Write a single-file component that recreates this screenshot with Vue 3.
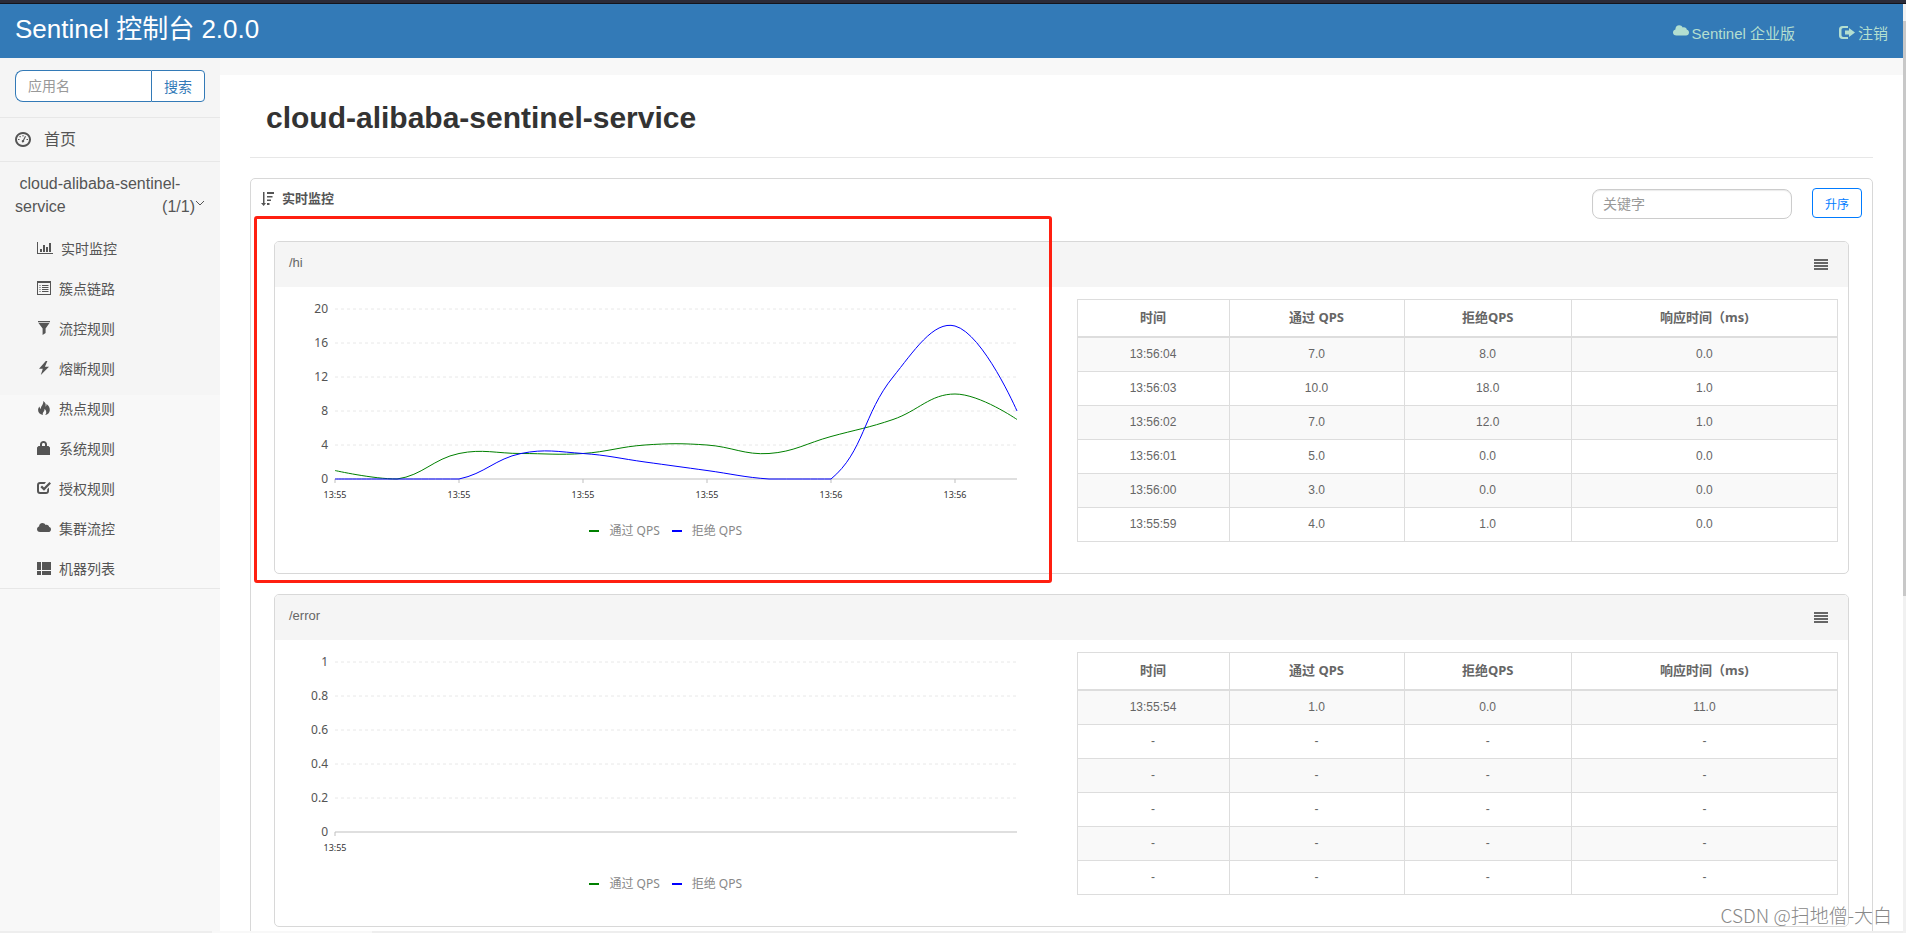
<script setup>
import { ref, computed, onMounted, onBeforeUnmount } from 'vue'

const menu = [
  { label: '实时监控', icon: 'chart' },
  { label: '簇点链路', icon: 'listAlt' },
  { label: '流控规则', icon: 'filter' },
  { label: '熔断规则', icon: 'flash' },
  { label: '热点规则', icon: 'fire' },
  { label: '系统规则', icon: 'lock' },
  { label: '授权规则', icon: 'check' },
  { label: '集群流控', icon: 'cloud' },
  { label: '机器列表', icon: 'thList' },
]

const icons = {
  chart: 'M0 1h1v11h15v1H0zM3 8h2v3H3zM6 4h2v7H6zM9 6h2v5H9zM12 2h2v9h-2z',
  listAlt: 'M0 0h14v14H0zM1 2v11h12V2zM2.500 4h1v1h-1zM5 4h6.500v1H5zM2.500 6h1v1h-1zM5 6h6.500v1H5zM2.500 8h1v1h-1zM5 8h6.500v1H5zM2.500 10h1v1h-1zM5 10h6.500v1H5z',
  filter: 'M1 0h12v1.200H1zM1.500 2h11L8.600 7.500V12L5.600 14V7.500z',
  flash: 'M8.800 0L2 7.800h3.800L3.800 14 12 5.800H7.900L10.400 0z',
  fire: 'M6.200 0c2.300 1.500 3 3.400 2.300 5.500.8-.3 1.100-1.200.9-2.500 2.400 1.500 3.600 3.900 3.400 6.200-.2 2.600-2 4.400-4.600 4.800 1.700-1.900 1.400-4.200-.7-6.200.2 1.800-.7 2.800-1.400 3.800-.5.800-.5 1.600-.2 2.400C2.900 13.500 1 11.600 1.100 9.100c0-1.400.6-2.500 1.500-3.500.1 1.400.5 2.100 1.300 2.300C3.700 4.800 6.800 3.600 6.200 0z',
  lock: 'M3 5V3.500C3 1.300 4.500 0 6.500 0S10 1.300 10 3.500V5h1.500L13 6.500V14H0V6.500L1.500 5zM5 5h3V3.500C8 2.500 7.500 2 6.500 2S5 2.500 5 3.500z',
  check: 'M3 1h6l-1.500 1.900H3.400C2.400 2.900 2 3.400 2 4.300v5.400c0 .9.500 1.400 1.400 1.400h5.400c.9 0 1.400-.5 1.400-1.400V8.200L12 6.400V10c0 2-1.200 3-3 3H3c-2 0-3-1.200-3-3V4c0-1.900 1.200-3 3-3zM12.400 1L14 2.500 7 9.700 3.400 6.200 5 4.600l2 2z',
  cloud: 'M3 11C1.200 11 0 9.900 0 8.300c0-1.400.9-2.400 2.100-2.700C2 3.400 3.600 2 5.400 2c1.400 0 2.500.7 3.100 1.900 1.900-.6 3.500.5 3.600 2.100C13.400 6.200 14 7.200 14 8.400c0 1.500-1.100 2.600-2.600 2.600z',
  thList: 'M0 1h4v8H0zM5 1h9v8H5zM0 10h4v4H0zM5 10h9v4H5z',
  dashboard: 'M8 0a8 7.500 0 1 0 .01 0zM8 2a6 5.500 0 1 1-.01 0zM7.500 3h1v1.500h-1zM4.500 4h1.200v1.200H4.500zM3 7h1.500v1H3zM11.500 7H13v1h-1.500zM10 4l1 .5L9 8.600a1.200 1.200 0 1 1-1-.6z',
  sort: 'M2 0h1.500v11H5L2.700 14 0 11h2zM6 0h7v2H6zM6 4h5.500v1.500H6zM6 7.500h4V9H6zM6 11h2.500v2H6z',
  justify: 'M0 0h14v2H0zM0 3h14v2H0zM0 6h14v2H0zM0 9h14v2H0z',
  logout: 'M3.500 0H9v2H4.500C3 2 2.500 2.700 2.500 4v5c0 1.300.7 2 2 2H9v2H3.500C1.200 13 0 11.700 0 9.500v-6C0 1.300 1.200 0 3.500 0zM10 2l6 4.500L10 11V8.500H6v-4h4z',
}

const headings = ['时间', '通过 QPS', '拒绝QPS', '响应时间（ms)']
const blank = ['-', '-', '-', '-']

const cards = [
  {
    name: '/hi',
    max: 20,
    yTicks: ['20', '16', '12', '8', '4', '0'],
    xTicks: ['13:55', '13:55', '13:55', '13:55', '13:56', '13:56'],
    pass: [1, 0, 3, 3, 3, 4, 4, 3, 5, 7, 10, 7],
    block: [0, 0, 0, 3, 3, 2, 1, 0, 0, 12, 18, 8],
    rows: [
      ['13:56:04', '7.0', '8.0', '0.0'],
      ['13:56:03', '10.0', '18.0', '1.0'],
      ['13:56:02', '7.0', '12.0', '1.0'],
      ['13:56:01', '5.0', '0.0', '0.0'],
      ['13:56:00', '3.0', '0.0', '0.0'],
      ['13:55:59', '4.0', '1.0', '0.0'],
    ],
    marked: true,
  },
  {
    name: '/error',
    max: 1,
    yTicks: ['1', '0.8', '0.6', '0.4', '0.2', '0'],
    xTicks: ['13:55'],
    pass: [],
    block: [],
    rows: [['13:55:54', '1.0', '0.0', '11.0'], blank, blank, blank, blank, blank],
    marked: false,
  },
]

const LEFT = 60
const RIGHT = 40
const TOP = 22
const BOTTOM = 192
const GAP = 34

const chartEls = ref([])
const chartWidth = ref(782)
const plotRight = computed(() => chartWidth.value - RIGHT)
const step = computed(() => (plotRight.value - LEFT) / 11)

// Smooth line through the points, with control points kept inside the plot area.
function smoothPath(values, max) {
  if (!values.length) return ''
  const pts = values.map((v, i) => [LEFT + i * step.value, BOTTOM - (v / max) * (BOTTOM - TOP)])
  const clamp = ([x, y]) => [
    Math.min(Math.max(x, LEFT), plotRight.value),
    Math.min(Math.max(y, TOP), BOTTOM),
  ]
  const dist = (a, b) => Math.hypot(a[0] - b[0], a[1] - b[1])
  const handles = pts.map((p, i) => {
    if (i === 0 || i === pts.length - 1) return [p, p]
    const prev = pts[i - 1]
    const next = pts[i + 1]
    const vx = (next[0] - prev[0]) * 0.4
    const vy = (next[1] - prev[1]) * 0.4
    const before = dist(p, prev)
    const after = dist(p, next)
    const a = before / (before + after)
    const b = after / (before + after)
    return [clamp([p[0] - vx * a, p[1] - vy * a]), clamp([p[0] + vx * b, p[1] + vy * b])]
  })
  let d = `M${pts[0]}`
  for (let i = 1; i < pts.length; i++) d += `C${handles[i - 1][1]} ${handles[i][0]} ${pts[i]}`
  return d
}

let observer
onMounted(() => {
  const measure = () => {
    if (chartEls.value[0]) chartWidth.value = Math.round(chartEls.value[0].clientWidth)
  }
  measure()
  observer = new ResizeObserver(measure)
  observer.observe(chartEls.value[0])
})
onBeforeUnmount(() => observer?.disconnect())
</script>

<template>
  <div class="shell">
    <div class="window-edge"></div>
    <div class="viewport">
      <div class="page">
        <header class="topbar">
          <a class="brand" href="#">Sentinel 控制台 2.0.0</a>
          <nav class="top-links">
            <a href="#"><svg class="cloud" viewBox="0 0 14 14"><path :d="icons.cloud" /></svg>Sentinel 企业版</a>
            <a href="#"><svg class="logout" viewBox="0 0 16 13"><path :d="icons.logout" /></svg>注销</a>
          </nav>
        </header>

        <div class="columns">
          <aside class="sidebar">
            <div class="side-top">
              <form class="search" @submit.prevent>
                <input type="text" placeholder="应用名" aria-label="应用名" />
                <button type="submit">搜索</button>
              </form>
              <a class="home" href="#">
                <svg viewBox="0 0 16 15"><path fill-rule="evenodd" :d="icons.dashboard" /></svg>首页
              </a>
              <a class="app" href="#">
                <span class="app-line">&nbsp;cloud-alibaba-sentinel-</span>
                <span class="app-line">
                  <span>service</span>
                  <span class="app-count">(1/1)<svg viewBox="0 0 10 6"><path d="M1 1l4 4 4-4" /></svg></span>
                </span>
              </a>
            </div>
            <ul class="menu">
              <li v-for="item in menu" :key="item.label">
                <a href="#">
                  <svg :class="item.icon" :viewBox="item.icon === 'chart' ? '0 0 16 14' : '0 0 14 14'">
                    <path fill-rule="evenodd" :d="icons[item.icon]" />
                  </svg>{{ item.label }}
                </a>
              </li>
            </ul>
          </aside>

          <main class="content">
            <h1>cloud-alibaba-sentinel-service</h1>
            <section class="panel">
              <div class="panel-head">
                <svg viewBox="0 0 13 14"><path :d="icons.sort" /></svg>
                <strong>实时监控</strong>
                <input type="text" placeholder="关键字" aria-label="关键字" />
                <button type="button">升序</button>
              </div>

              <article v-for="(card, c) in cards" :key="card.name" class="card">
                <div class="card-head">
                  <span>{{ card.name }}</span>
                  <svg viewBox="0 0 14 11"><path :d="icons.justify" /></svg>
                </div>
                <div class="card-body">
                  <div :ref="(el) => (chartEls[c] = el)" class="chart">
                    <svg :width="chartWidth" height="286">
                      <g class="grid">
                        <line
                          v-for="n in 5"
                          :key="n"
                          :x1="LEFT"
                          :x2="plotRight"
                          :y1="TOP + (n - 1) * GAP"
                          :y2="TOP + (n - 1) * GAP"
                        />
                      </g>
                      <g class="axis">
                        <line :x1="LEFT" :x2="plotRight" :y1="BOTTOM" :y2="BOTTOM" />
                        <line
                          v-for="(t, i) in card.xTicks"
                          :key="i"
                          :x1="LEFT + i * 2 * step"
                          :x2="LEFT + i * 2 * step"
                          :y1="BOTTOM"
                          :y2="BOTTOM + 4"
                        />
                      </g>
                      <g class="y-labels">
                        <text v-for="(t, i) in card.yTicks" :key="t" :x="LEFT - 7" :y="TOP + 4 + i * GAP">{{ t }}</text>
                      </g>
                      <g class="x-labels">
                        <text v-for="(t, i) in card.xTicks" :key="i" :x="LEFT + i * 2 * step" :y="BOTTOM + 19">{{ t }}</text>
                      </g>
                      <path class="line pass" :d="smoothPath(card.pass, card.max)" />
                      <path class="line block" :d="smoothPath(card.block, card.max)" />
                    </svg>
                    <div class="legend">
                      <span class="pass">通过 QPS</span>
                      <span class="block">拒绝 QPS</span>
                    </div>
                  </div>
                  <div class="table-wrap">
                    <table>
                      <colgroup>
                        <col class="c-time" /><col class="c-pass" /><col class="c-block" /><col />
                      </colgroup>
                      <thead>
                        <tr><th v-for="h in headings" :key="h" scope="col">{{ h }}</th></tr>
                      </thead>
                      <tbody>
                        <tr v-for="(row, r) in card.rows" :key="r">
                          <td v-for="(cell, i) in row" :key="i">{{ cell }}</td>
                        </tr>
                      </tbody>
                    </table>
                  </div>
                </div>
                <div v-if="card.marked" class="marker"></div>
              </article>
            </section>
          </main>
        </div>
        <div class="bottom-bar"><i></i><b></b></div>
      </div>
      <div class="scrollbar"><div class="thumb"></div></div>
    </div>
    <div class="watermark">CSDN @扫地僧-大白</div>
  </div>
</template>

<style>
body {
  margin: 0;
  overflow: hidden;
}
</style>

<style scoped>
* {
  box-sizing: border-box;
}
.shell {
  position: relative;
  display: flex;
  flex-direction: column;
  height: 100vh;
  font-family: "Liberation Sans", "Noto Sans CJK SC", sans-serif;
  color: #555;
  background: #f8f8f8;
}
a {
  color: inherit;
  text-decoration: none;
}
svg {
  display: block;
  flex: none;
  fill: currentColor;
}
button,
input {
  font-family: inherit;
  outline: none;
}
input::placeholder {
  color: #999;
  opacity: 1;
}
.window-edge {
  flex: none;
  height: 4px;
  background: #2b2b38;
  border-bottom: 1px solid #14141c;
}
.viewport {
  display: flex;
  flex: 1;
  min-height: 0;
}
.page {
  display: flex;
  flex: 1;
  flex-direction: column;
  min-width: 0;
}
.topbar {
  display: flex;
  flex: none;
  justify-content: space-between;
  height: 54px;
  padding: 0 15px;
  background: #337ab7;
}
.brand {
  font-size: 26px;
  line-height: 50px;
  color: #fff;
}
.top-links {
  display: flex;
  gap: 44px;
  height: 60px;
  font-size: 15px;
  line-height: 60px;
  color: #b3dfd0;
}
.top-links a {
  display: flex;
  align-items: center;
  gap: 3px;
}
.top-links .cloud {
  width: 16px;
  height: 16px;
  margin-bottom: 6px;
}
.top-links .logout {
  width: 16px;
  height: 13px;
  margin-bottom: 4px;
}
.columns {
  display: flex;
  flex: 1;
  min-height: 0;
  overflow: hidden;
}
.sidebar {
  flex: none;
  width: 220px;
  background: linear-gradient(#f5f5f5 337px, #f8f8f8 337px);
}
.search {
  display: flex;
  height: 60px;
  padding: 12px 15px 15px;
  border-bottom: 1px solid #e7e7e7;
}
.search input {
  flex: 1;
  min-width: 0;
  padding: 0 12px;
  font-size: 14px;
  border: 1px solid #337ab7;
  border-right: 0;
  border-radius: 8px 0 0 8px;
  background: #fff;
}
.search button {
  width: 54px;
  padding: 0;
  font-size: 14px;
  color: #337ab7;
  border: 1px solid #337ab7;
  border-radius: 0 4px 4px 0;
  background: #fff;
}
.home {
  display: flex;
  align-items: center;
  gap: 13px;
  height: 44px;
  padding: 0 15px 4px;
  font-size: 16px;
  border-bottom: 1px solid #e7e7e7;
}
.home svg {
  width: 16px;
  height: 15px;
  margin-top: 4px;
}
.app {
  display: block;
  padding: 10px 15px;
  font-size: 16px;
  line-height: 23px;
}
.app-line {
  display: flex;
  justify-content: space-between;
}
.app-count {
  display: flex;
}
.app-count svg {
  width: 10px;
  height: 6px;
  margin-top: 5px;
  fill: none;
  stroke: currentColor;
}
.menu {
  margin: 0;
  padding: 0 0 0 37px;
  list-style: none;
  border-bottom: 1px solid #e7e7e7;
}
.menu a {
  display: flex;
  align-items: center;
  gap: 8px;
  height: 40px;
  font-size: 14px;
}
.menu svg {
  width: 14px;
  height: 14px;
}
.menu svg.chart {
  width: 16px;
}
.content {
  flex: 1;
  min-width: 0;
  min-height: 100%;
  margin-top: 17px;
  padding: 0 30px;
  background: #fff;
}
h1 {
  margin: 0 0 20px;
  padding: 21px 16px 18px;
  font-size: 30px;
  line-height: 43px;
  color: #333;
  border-bottom: 1px solid #e7e7e7;
}
.panel {
  padding: 0 23px 20px;
  border: 1px solid #d8d8d8;
  border-radius: 5px;
}
.panel-head {
  display: flex;
  height: 42px;
  margin: 0 -13px 20px;
  font-size: 13px;
  color: #555;
}
.panel-head svg {
  width: 13px;
  height: 14px;
  margin-top: 13px;
}
.panel-head strong {
  flex: 1;
  margin: 10px 0 0 8px;
  line-height: 20px;
}
.panel-head input {
  width: 200px;
  height: 30px;
  margin-top: 10px;
  padding: 0 10px;
  font-size: 14px;
  border: 1px solid #ccc;
  border-radius: 8px;
  box-shadow: inset 0 1px 1px rgba(0, 0, 0, 0.08);
}
.panel-head button {
  width: 50px;
  height: 30px;
  margin: 9px 0 0 20px;
  padding: 0;
  font-size: 12px;
  color: #007bff;
  border: 1px solid #007bff;
  border-radius: 4px;
  background: #fff;
}
.card {
  position: relative;
  margin-bottom: 20px;
  border: 1px solid #d8d8d8;
  border-radius: 5px;
  color: #666;
}
.card-head {
  display: flex;
  align-items: center;
  justify-content: space-between;
  height: 45px;
  padding: 0 20px 4px 14px;
  font-size: 13px;
  background: #f5f5f5;
  border-radius: 4px 4px 0 0;
}
.card-head svg {
  width: 14px;
  height: 11px;
  margin-top: 4px;
}
.card-body {
  display: grid;
  grid-template-columns: 1fr 1fr;
  height: 286px;
  padding-right: 10px;
}
.chart {
  position: relative;
  min-width: 0;
  overflow: hidden;
}
.grid line {
  stroke: #e8e8e8;
  stroke-dasharray: 3 3;
}
.axis line {
  stroke: #bfbfbf;
}
.y-labels text {
  font: 12px "Noto Sans", sans-serif;
  text-anchor: end;
  fill: #545454;
}
.x-labels text {
  font: 9px "Noto Sans", sans-serif;
  text-anchor: middle;
  fill: #333;
}
.line {
  fill: none;
  stroke-width: 1;
}
.line.pass {
  stroke: #008000;
}
.line.block {
  stroke: #0000ff;
}
.legend {
  position: absolute;
  right: 0;
  bottom: 32px;
  left: 0;
  display: flex;
  justify-content: center;
  gap: 12px;
  font: 12px/20px "Noto Sans", "Noto Sans CJK SC", sans-serif;
  color: #888;
}
.legend span {
  display: flex;
  align-items: center;
  gap: 10px;
}
.legend span::before {
  width: 10px;
  height: 2px;
  content: "";
  background: #008000;
}
.legend .block::before {
  background: #0000ff;
}
.table-wrap {
  padding: 12px 0 0 20px;
}
table {
  width: 100%;
  table-layout: fixed;
  border-collapse: collapse;
  font-size: 12px;
  line-height: 17px;
  text-align: center;
}
.c-time {
  width: 20%;
}
.c-pass {
  width: 23%;
}
.c-block {
  width: 22%;
}
th,
td {
  padding: 8px;
  border: 1px solid #ddd;
}
th {
  height: 37px;
  font: bold 13px/17px "Noto Sans", "Noto Sans CJK SC", sans-serif;
  border-bottom-width: 2px;
}
td {
  height: 34px;
}
tbody tr:nth-child(odd) {
  background: #f9f9f9;
}
.marker {
  position: absolute;
  top: -26px;
  bottom: -10px;
  left: -21px;
  width: calc(50% + 11px);
  border: 3px solid #ff1f10;
  border-radius: 3px;
  pointer-events: none;
}
.bottom-bar {
  display: flex;
  flex: none;
  height: 2px;
  background: #eee;
}
.bottom-bar i {
  width: 212px;
}
.bottom-bar b {
  width: 160px;
  background: #f8f8f8;
}
.scrollbar {
  flex: none;
  width: 3px;
  padding-top: 17px;
  background: #f1f1f1;
}
.thumb {
  height: 63%;
  background: #c8c8c8;
}
.watermark {
  position: absolute;
  right: 14px;
  bottom: 5px;
  font: 300 19px/26px "Noto Sans CJK SC", sans-serif;
  color: #888;
}
</style>
